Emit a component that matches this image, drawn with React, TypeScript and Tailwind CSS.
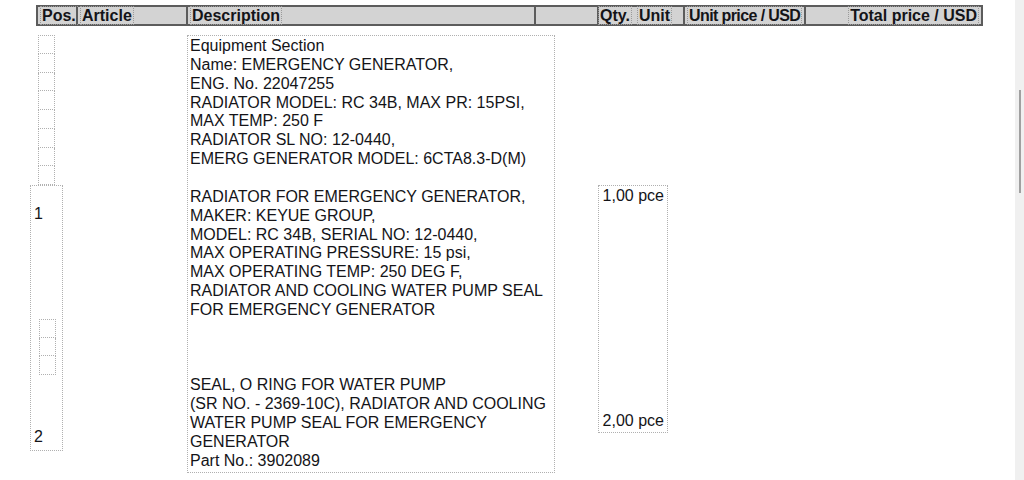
import React from "react"

const font = { fontFamily: '"Liberation Sans", Arial, sans-serif' }

const descLines = [
  "Equipment Section",
  "Name: EMERGENCY GENERATOR,",
  "ENG. No. 22047255",
  "RADIATOR MODEL: RC 34B, MAX PR: 15PSI,",
  "MAX TEMP: 250 F",
  "RADIATOR SL NO: 12-0440,",
  "EMERG GENERATOR MODEL: 6CTA8.3-D(M)",
  "",
  "RADIATOR FOR EMERGENCY GENERATOR,",
  "MAKER: KEYUE GROUP,",
  "MODEL: RC 34B, SERIAL NO: 12-0440,",
  "MAX OPERATING PRESSURE: 15 psi,",
  "MAX OPERATING TEMP: 250 DEG F,",
  "RADIATOR AND COOLING WATER PUMP SEAL",
  "FOR EMERGENCY GENERATOR",
  "",
  "",
  "",
  "SEAL, O RING FOR WATER PUMP",
  "(SR NO. - 2369-10C), RADIATOR AND COOLING",
  "WATER PUMP SEAL FOR EMERGENCY",
  "GENERATOR",
  "Part No.: 3902089",
]

function SmallBoxes({ count }: { count: number }) {
  return (
    <div className="flex flex-col">
      {Array.from({ length: count }).map((_, i) => (
        <div
          key={i}
          className={`w-[17px] h-[18.75px] border-x border-b border-dotted border-[#b0b0b0] ${i === 0 ? "border-t" : ""}`}
        />
      ))}
    </div>
  )
}

function HeadLabel({ children, className = "" }: { children: React.ReactNode; className?: string }) {
  return (
    <span className={`outline outline-1 outline-dotted outline-[#9a9a9a] px-[1px] leading-[17px] ${className}`}>
      {children}
    </span>
  )
}

export default function App() {
  return (
    <div className="relative w-[1024px] h-[480px] bg-white overflow-hidden text-[#141418]" style={font}>
      <div className="flex h-full">
        <div className="w-[1015px]">
          {/* header bar */}
          <div className="ml-[36px] mt-[5px] w-[947px] h-[21px] flex bg-[#d3d3d3] border-y-2 border-[#5c5c5c] text-[16px] font-bold">
            <div className="w-[40px] border-l-2 border-[#5c5c5c] flex items-center pl-[3px]">
              <HeadLabel>Pos.</HeadLabel>
            </div>
            <div className="w-[110px] border-l-2 border-[#5c5c5c] flex items-center pl-[3px]">
              <HeadLabel>Article</HeadLabel>
            </div>
            <div className="w-[348px] border-l-2 border-[#5c5c5c] flex items-center pl-[3px]">
              <HeadLabel>Description</HeadLabel>
            </div>
            <div className="w-[63px] border-l-2 border-[#5c5c5c]" />
            <div className="w-[86px] border-l-2 border-[#5c5c5c] flex items-center gap-[7px]">
              <HeadLabel>Qty.</HeadLabel>
              <HeadLabel>Unit</HeadLabel>
            </div>
            <div className="w-[121px] border-l-2 border-[#5c5c5c] flex items-center pl-[3px]">
              <HeadLabel className="tracking-[-0.6px]">Unit price / USD</HeadLabel>
            </div>
            <div className="flex-1 border-x-2 border-[#5c5c5c] flex items-center justify-end pr-[3px]">
              <HeadLabel>Total price / USD</HeadLabel>
            </div>
          </div>

          {/* body */}
          <div className="flex items-start mt-[9px] text-[16px] leading-[18.86px]">
            {/* pos column */}
            <div className="ml-[30px] w-[33px] flex flex-col">
              <div className="ml-[8px]">
                <SmallBoxes count={8} />
              </div>
              <div className="h-[266px] border border-dotted border-[#b0b0b0] flex flex-col pl-[3px]">
                <div className="mt-[19px]">1</div>
                <div className="mt-[95px] ml-[5px]">
                  <SmallBoxes count={3} />
                </div>
                <div className="mt-auto mb-[3px]">2</div>
              </div>
            </div>

            {/* description */}
            <div className="ml-[124px] w-[368px] h-[438px] border border-dotted border-[#b0b0b0] pl-[2px] pt-[1px]">
              {descLines.map((l, i) => (
                <div key={i} className="h-[18.86px] whitespace-pre">
                  {l || " "}
                </div>
              ))}
            </div>

            {/* qty */}
            <div className="ml-[43px] mt-[150px] w-[70px] h-[248px] border border-dotted border-[#b0b0b0] flex flex-col items-end pr-[3px]">
              <div className="mt-[1px]">1,00 pce</div>
              <div className="mt-auto mb-[1px]">2,00 pce</div>
            </div>
          </div>
        </div>

        {/* scrollbar */}
        <div className="w-[9px] h-full bg-[#f0f0f0] flex justify-center">
          <div className="mt-[90px] w-[2px] h-[103px] bg-[#a0a0a0]" />
        </div>
      </div>
    </div>
  )
}
